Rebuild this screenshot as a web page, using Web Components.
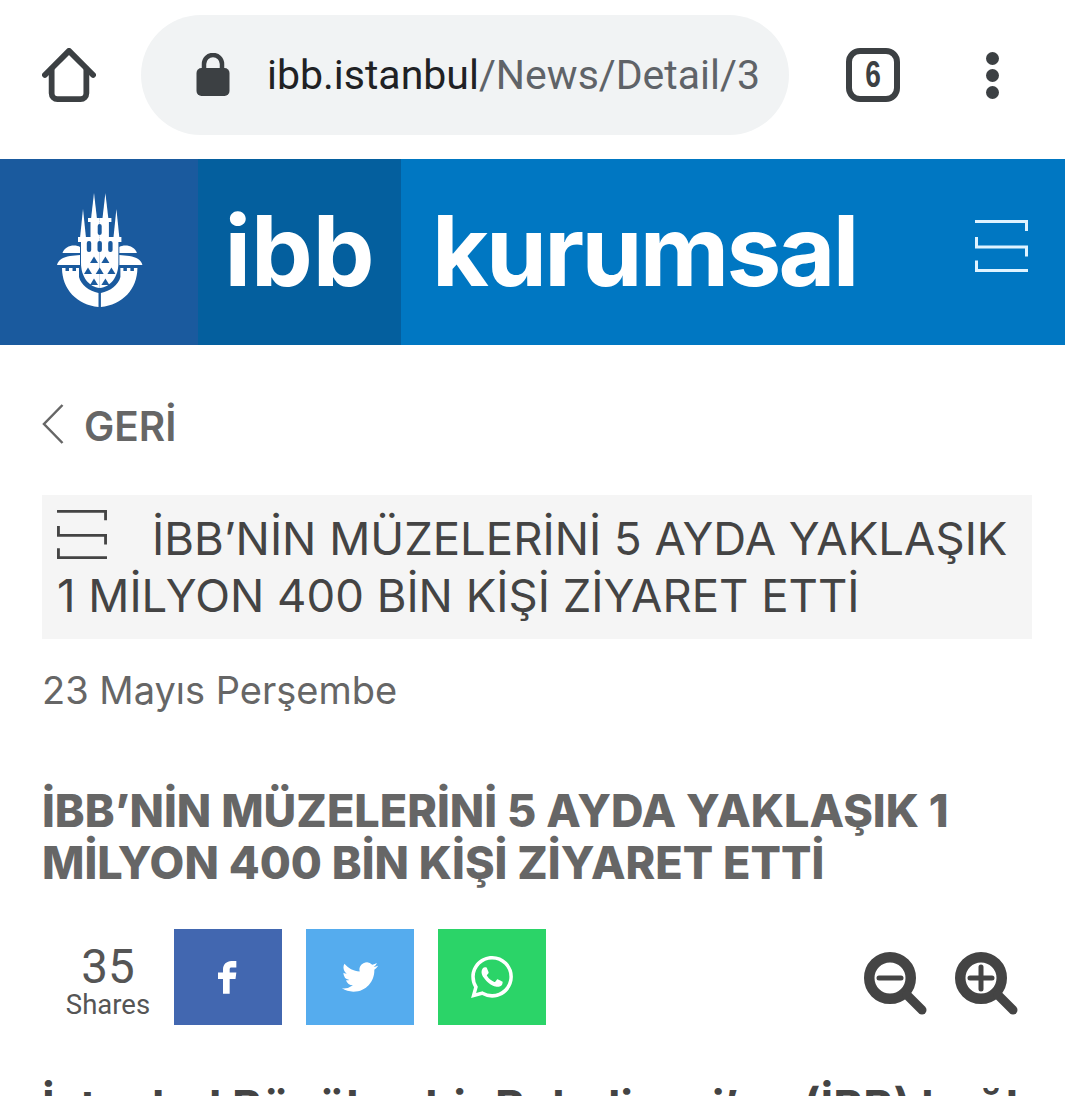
<!DOCTYPE html>
<html lang="tr">
<head>
<meta charset="utf-8">
<title>İBB Kurumsal</title>
<style>
  html, body { margin: 0; padding: 0; background: #fff; height: 1096px; overflow: hidden; }
  body { font-family: "Inter", "Liberation Sans", sans-serif; }
</style>
</head>
<body>
<browser-bar>
  <span slot="host">ibb.istanbul</span><span slot="path">/News/Detail/3</span>
</browser-bar>
<site-header></site-header>
<main-column>
  <back-link>GERİ</back-link>
  <news-title>İBB’NİN MÜZELERİNİ 5 AYDA YAKLAŞIK 1 MİLYON 400 BİN KİŞİ ZİYARET ETTİ</news-title>
  <news-date>23 Mayıs Perşembe</news-date>
  <news-heading>İBB’NİN MÜZELERİNİ 5 AYDA YAKLAŞIK 1 MİLYON 400 BİN KİŞİ ZİYARET ETTİ</news-heading>
  <share-bar count="35"></share-bar>
  <news-body>İstanbul Büyükşehir Belediyesi’ne (İBB) bağlı</news-body>
</main-column>

<script>
  const menuLines = `
    <path d="M0 1.5H51.5V11M1.5 17V27H51.5V36.5M1.5 40.5V50.5H53" fill="none" stroke="currentColor" stroke-width="3"/>`;

  class BrowserBar extends HTMLElement {
    constructor() {
      super();
      this.attachShadow({ mode: 'open' });
      this.shadowRoot.innerHTML = `
        <style>
          :host { display: flex; align-items: center; height: 159px; box-sizing: border-box; padding: 15px 0 24px 42px; color: #3c4043; }
          .home { width: 54px; height: 54px; margin-right: 45px; }
          .pill { width: 648px; height: 120px; border-radius: 60px; background: #f1f3f4; display: flex; align-items: center; padding-left: 55px; box-sizing: border-box; }
          .lock { width: 34px; height: 44px; margin-right: 37px; }
          .url { font: 400 41px "Roboto", sans-serif; white-space: nowrap; color: #202124; }
          ::slotted([slot="path"]) { color: #5f6368; }
          .tabs { width: 54px; height: 54px; margin-left: 57px; box-sizing: border-box; border: 6px solid #3c4043; border-radius: 14px; display: flex; align-items: center; justify-content: center; font: 700 36px "Liberation Sans", sans-serif; }
          .tabs span { display: block; transform: scaleX(.78); }
          .dots { margin-left: 86px; display: flex; flex-direction: column; gap: 4px; }
          .dots i { display: block; width: 13px; height: 13px; border-radius: 50%; background: #3c4043; }
        </style>
        <svg class="home" viewBox="0 0 56 56" fill="none" stroke="currentColor" stroke-width="6" stroke-linecap="round" stroke-linejoin="round">
          <path d="M3 28 28 3 53 28"/>
          <path d="M10 22V47a6 6 0 0 0 6 6H40a6 6 0 0 0 6-6V22"/>
        </svg>
        <div class="pill">
          <svg class="lock" viewBox="0 0 34 44">
            <path d="M8 17V11a9 9 0 0 1 18 0v6" fill="none" stroke="#3c4043" stroke-width="4.5"/>
            <rect x="0.5" y="15" width="33" height="28" rx="5" fill="#3c4043"/>
          </svg>
          <span class="url"><slot name="host"></slot><slot name="path"></slot></span>
        </div>
        <div class="tabs"><span>6</span></div>
        <div class="dots"><i></i><i></i><i></i></div>
      `;
    }
  }

  class IbbLogo extends HTMLElement {
    constructor() {
      super();
      this.attachShadow({ mode: 'open' });
      const half = `
        <polygon points="45,8 42,34 48,34"/>
        <polygon points="34,24 31,53 37,53"/>
        <rect x="39" y="33" width="11.7" height="4"/>
        <rect x="41.5" y="36" width="9.2" height="17"/>
        <rect x="29" y="52" width="21.7" height="5"/>
        <path d="M32 56H50.7V103C40 102 32 92 32 78Z"/>
        <path d="M13.5 68C15 63 20 60.5 25 60.5 27.5 60.5 29.5 61 31 62V68Z"/>
        <path d="M8 80C9 75 14 72 21 71L31 70V80Z"/>
        <path d="M13 83H16.5V86H20V83H23.5V86H27V83H30V92C32 100 40 106 49.5 108V122C28 120 13 104 13 83Z"/>`;
      const triangles = [[45, 75], [56.4, 75], [39, 86], [50.7, 86], [62.4, 86], [45, 97], [56.4, 97]]
        .map(([x, y]) => `<polygon points="${x},${y - 3.5} ${x + 4},${y + 3} ${x - 4},${y + 3}"/>`).join('');
      this.shadowRoot.innerHTML = `
        <style>
          :host { display: block; width: 100px; height: 130px; }
          svg { display: block; }
        </style>
        <svg width="100" height="130" viewBox="0 0 100 130">
          <g fill="#fff">
            ${half}
            <g transform="translate(101.4 0) scale(-1 1)">${half}</g>
          </g>
          <g fill="#1a5a9e">
            <rect x="48.7" y="39" width="4" height="11" rx="2"/>
            <rect x="37.8" y="56" width="4.4" height="11" rx="2"/>
            <rect x="48.5" y="56" width="4.4" height="11" rx="2"/>
            <rect x="59.2" y="56" width="4.4" height="11" rx="2"/>
            ${triangles}
          </g>
        </svg>
      `;
    }
  }

  class SiteHeader extends HTMLElement {
    constructor() {
      super();
      this.attachShadow({ mode: 'open' });
      this.shadowRoot.innerHTML = `
        <style>
          :host { display: flex; height: 186px; background: #0077c2; color: #fff; font: 700 98px "Inter", sans-serif; }
          .crest { width: 198px; background: #1a5a9e; display: flex; align-items: center; justify-content: center; padding-bottom: 4px; box-sizing: border-box; }
          .abbr { width: 203px; background: #045f9e; display: flex; align-items: center; justify-content: center; box-sizing: border-box; }
          .name { flex: 1; display: flex; align-items: center; padding-left: 31px; letter-spacing: -2.75px; }
          .word { line-height: 1; display: block; margin-top: -2px; }
          .menu { width: 53px; height: 52px; margin: -13px 37px 0 auto; color: #dff3ff; }
        </style>
        <div class="crest"><ibb-logo></ibb-logo></div>
        <div class="abbr"><span class="word">ibb</span></div>
        <div class="name">
          <span class="word">kurumsal</span>
          <svg class="menu" viewBox="0 0 53 52">${menuLines}</svg>
        </div>
      `;
    }
  }

  class MainColumn extends HTMLElement {
    constructor() {
      super();
      this.attachShadow({ mode: 'open' });
      this.shadowRoot.innerHTML = `
        <style>
          :host { display: block; padding: 0 33px 0 42px; }
        </style>
        <slot></slot>
      `;
    }
  }

  class BackLink extends HTMLElement {
    constructor() {
      super();
      this.attachShadow({ mode: 'open' });
      this.shadowRoot.innerHTML = `
        <style>
          :host { display: flex; align-items: center; height: 150px; box-sizing: border-box; padding-top: 8px; color: #666; font: 600 40.5px "Inter", sans-serif; }
          svg { width: 22px; height: 40px; margin-right: 20px; }
          span { display: block; margin-top: 4px; }
        </style>
        <svg viewBox="0 0 22 40" fill="none" stroke="#666" stroke-width="2.5"><path d="M20.5 1 2 20 20.5 39"/></svg>
        <span><slot></slot></span>
      `;
    }
  }

  class NewsTitle extends HTMLElement {
    constructor() {
      super();
      this.attachShadow({ mode: 'open' });
      this.shadowRoot.innerHTML = `
        <style>
          :host { display: block; background: #f5f5f5; color: #444; padding: 15px 15px 14px 15px; font: 400 45.5px/57px "Inter", sans-serif; height: 144px; box-sizing: border-box; }
          svg { width: 50px; height: 49px; margin-right: 45px; vertical-align: -4px; color: #444; }
        </style>
        <svg viewBox="0 0 53 52">${menuLines}</svg><slot></slot>
      `;
    }
  }

  class NewsDate extends HTMLElement {
    constructor() {
      super();
      this.attachShadow({ mode: 'open' });
      this.shadowRoot.innerHTML = `
        <style>
          :host { display: block; margin-top: 26px; color: #666; font: 400 38px/50px "Inter", sans-serif; }
        </style>
        <slot></slot>
      `;
    }
  }

  class NewsHeading extends HTMLElement {
    constructor() {
      super();
      this.attachShadow({ mode: 'open' });
      this.shadowRoot.innerHTML = `
        <style>
          :host { display: block; margin-top: 70px; color: #666; font: 800 45px/52px "Inter", sans-serif; }
        </style>
        <slot></slot>
      `;
    }
  }

  class ShareBar extends HTMLElement {
    constructor() {
      super();
      this.attachShadow({ mode: 'open' });
      const count = this.getAttribute('count');
      this.shadowRoot.innerHTML = `
        <style>
          :host { display: flex; align-items: center; margin-top: 40px; height: 96px; color: #555; font-family: "Roboto", sans-serif; }
          .count { width: 132px; display: flex; flex-direction: column; align-items: center; padding-top: 10px; box-sizing: border-box; }
          .count b { font: 400 47.5px/46px "Roboto", sans-serif; }
          .count span { font: 400 27.5px/30px "Roboto", sans-serif; }
          .btn { width: 108px; height: 96px; margin-right: 24px; display: flex; align-items: center; justify-content: center; }
          .fb { background: #4267b0; }
          .tw { background: #55acee; }
          .wa { background: #2bd468; margin-right: 0; }
          .btn svg { fill: #fff; display: block; }
          .zoom { width: 64px; height: 64px; display: block; margin-top: 14px; }
          .zoom.first { margin-left: auto; margin-right: 27px; }
          .zoom.last { margin-right: 13px; }
        </style>
        <div class="count"><b>${count}</b><span>Shares</span></div>
        <div class="btn fb"><svg width="40" height="40" viewBox="0 0 24 24"><path d="M14 8h3V4h-3c-2.8 0-5 2.2-5 5v2H6v4h3v9h4v-9h3.5l.5-4h-4V9c0-.6.4-1 1-1z" transform="translate(0 -1.5) scale(1 .98)"/></svg></div>
        <div class="btn tw"><svg width="36" height="36" viewBox="0 0 24 24"><path d="M23.953 4.57a10 10 0 01-2.825.775 4.958 4.958 0 002.163-2.723c-.951.555-2.005.959-3.127 1.184a4.92 4.92 0 00-8.384 4.482C7.69 8.095 4.067 6.13 1.64 3.162a4.822 4.822 0 00-.666 2.475c0 1.71.87 3.213 2.188 4.096a4.904 4.904 0 01-2.228-.616v.06a4.923 4.923 0 003.946 4.827 4.996 4.996 0 01-2.212.085 4.936 4.936 0 004.604 3.417 9.867 9.867 0 01-6.102 2.105c-.39 0-.779-.023-1.17-.067a13.995 13.995 0 007.557 2.209c9.053 0 13.998-7.496 13.998-13.985 0-.21 0-.42-.015-.63A9.935 9.935 0 0024 4.59z"/></svg></div>
        <div class="btn wa"><svg width="42" height="42" viewBox="0 0 24 24"><path d="M17.472 14.382c-.297-.149-1.758-.867-2.03-.967-.273-.099-.471-.148-.67.15-.197.297-.767.966-.94 1.164-.173.199-.347.223-.644.075-.297-.15-1.255-.463-2.39-1.475-.883-.788-1.48-1.761-1.653-2.059-.173-.297-.018-.458.13-.606.134-.133.298-.347.446-.52.149-.174.198-.298.298-.497.099-.198.05-.371-.025-.52-.075-.149-.669-1.612-.916-2.207-.242-.579-.487-.5-.669-.51-.173-.008-.371-.01-.57-.01-.198 0-.52.074-.792.372-.272.297-1.04 1.016-1.04 2.479 0 1.462 1.065 2.875 1.213 3.074.149.198 2.096 3.2 5.077 4.487.709.306 1.262.489 1.694.625.712.227 1.36.195 1.871.118.571-.085 1.758-.719 2.006-1.413.248-.694.248-1.289.173-1.413-.074-.124-.272-.198-.57-.347m-5.421 7.403h-.004a9.87 9.87 0 01-5.031-1.378l-.361-.214-3.741.982.998-3.648-.235-.374a9.86 9.86 0 01-1.51-5.26c.001-5.45 4.436-9.884 9.888-9.884 2.64 0 5.122 1.03 6.988 2.898a9.825 9.825 0 012.893 6.994c-.003 5.45-4.437 9.884-9.885 9.884m8.413-18.297A11.815 11.815 0 0012.05 0C5.495 0 .16 5.335.157 11.892c0 2.096.547 4.142 1.588 5.945L.057 24l6.305-1.654a11.882 11.882 0 005.683 1.448h.005c6.554 0 11.89-5.335 11.893-11.893a11.821 11.821 0 00-3.48-8.413z"/></svg></div>
        <svg class="zoom first" viewBox="0 0 64 64" fill="none" stroke="#444" stroke-linecap="round">
          <circle cx="26" cy="26" r="20.75" stroke-width="10.5"/>
          <path d="M43 43 58 58" stroke-width="9"/>
          <path d="M15 26H37" stroke-width="5"/>
        </svg>
        <svg class="zoom last" viewBox="0 0 64 64" fill="none" stroke="#444" stroke-linecap="round">
          <circle cx="26" cy="26" r="20.75" stroke-width="10.5"/>
          <path d="M43 43 58 58" stroke-width="9"/>
          <path d="M15 26H37M26 15V37" stroke-width="5"/>
        </svg>
      `;
    }
  }

  class NewsBody extends HTMLElement {
    constructor() {
      super();
      this.attachShadow({ mode: 'open' });
      this.shadowRoot.innerHTML = `
        <style>
          :host { display: block; margin-top: 57px; color: #444; font: 700 45.5px/50px "Inter", sans-serif; white-space: nowrap; }
        </style>
        <slot></slot>
      `;
    }
  }

  customElements.define('browser-bar', BrowserBar);
  customElements.define('ibb-logo', IbbLogo);
  customElements.define('site-header', SiteHeader);
  customElements.define('main-column', MainColumn);
  customElements.define('back-link', BackLink);
  customElements.define('news-title', NewsTitle);
  customElements.define('news-date', NewsDate);
  customElements.define('news-heading', NewsHeading);
  customElements.define('share-bar', ShareBar);
  customElements.define('news-body', NewsBody);
</script>
</body>
</html>
